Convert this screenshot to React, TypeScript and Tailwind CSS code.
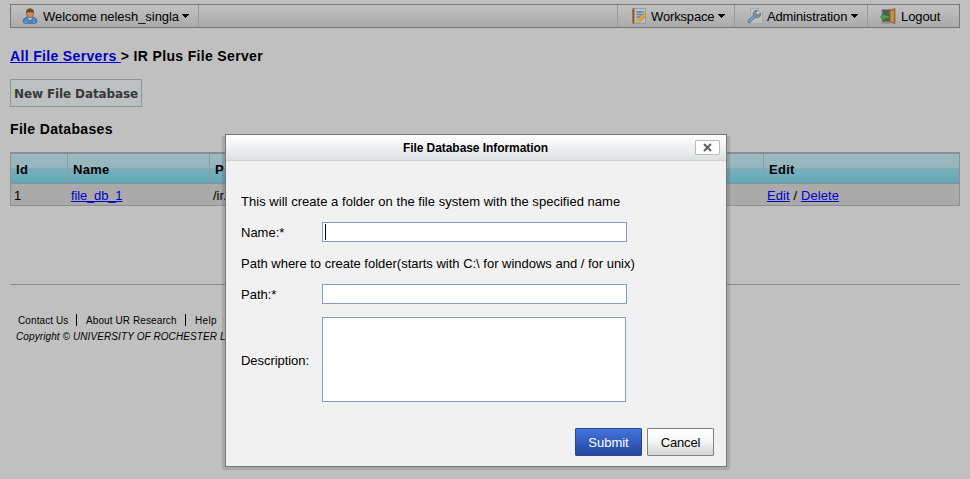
import React from "react";

const UserIcon = () => (
  <svg width="16" height="16" viewBox="0 0 16 16">
    <path d="M1.200 14.500V13c0-2.300 1.800-3.700 4-3.700h5.600c2.200 0 4 1.400 4 3.700v1.500l-2 .8H3.200z" fill="#4f86c4" stroke="#315f91" strokeWidth=".7" />
    <path d="M5.500 9.500 8 12l2.500-2.500z" fill="#c9d3dd" />
    <path d="M4 12.500v2.500M12 12.500v2.500" stroke="#7aa9d8" />
    <ellipse cx="8" cy="5.800" rx="3.400" ry="3.800" fill="#c98f5c" stroke="#744725" strokeWidth=".6" />
    <path d="M4.200 6C3.500 2 5.500.5 8 .5S12.500 2 11.800 6L11 4.200H5z" fill="#74441f" />
  </svg>
);

const NotebookIcon = () => (
  <svg width="16" height="16" viewBox="0 0 16 16">
    <path d="M2.500.5h12v15h-12z" fill="#b9bfc6" stroke="#8d969d" strokeWidth=".8" />
    <path d="M1 .5h2.500v15H1z" fill="#9c5526" />
    <path d="M0 2h2M0 5h2M0 8h2M0 11h2M0 14h2" stroke="#c4bdb6" strokeWidth=".8" />
    <path d="M5.500 4H12.500M5.500 6.500H11M5.500 9H9" stroke="#5783b2" strokeWidth="1.300" />
    <path d="m6.500 11 6-5.500 2.500 2.500-6 5.800-3.500 1z" fill="#dda93f" stroke="#9b6a26" strokeWidth=".5" />
    <path d="m5.500 14.800 1-3 2 2z" fill="#d8c4a0" />
    <path d="m12 5.800 1.500-1.300 2.200 2.300L14.500 8.200z" fill="#c99a58" />
  </svg>
);

const WrenchIcon = () => (
  <svg width="16" height="16" viewBox="0 0 16 16">
    <path d="M3.500.5H12l3.500 3.500v11.500h-12z" fill="#bfc0c2" stroke="#a2a4a7" strokeWidth=".8" />
    <path d="M12 .5v3.500h3.500" fill="#cdcdcd" stroke="#a2a4a7" strokeWidth=".7" />
    <path d="m2.300 13.300 5-4.800" stroke="#4c76a8" strokeWidth="3.600" strokeLinecap="round" />
    <path d="m2.300 13.300 5-4.800" stroke="#7ba0cd" strokeWidth="2.200" strokeLinecap="round" />
    <path d="M6.500 7.500C5.500 4.500 7.500 2 10.500 2.500L8.700 4.600l.5 2.100 2.200.6 1.900-2c.8 2.700-1.700 5-4.500 4.300z" fill="#8b98a5" stroke="#596977" strokeWidth=".9" />
  </svg>
);

const LogoutIcon = () => (
  <svg width="16" height="16" viewBox="0 0 16 16">
    <path d="M2 1.500h8V14H2z" fill="#525b5a" stroke="#858b86" />
    <path d="m9.800 2 5.200-1.500v15L9.800 14z" fill="#b37a3a" stroke="#8b5726" strokeWidth=".7" />
    <path d="m11 3.500 2.500-.7v10.500l-2.500-.5z" fill="#c9944f" />
    <path d="M.5 9 5 5v2.300h4v3.400H5v2.300z" fill="#54a347" stroke="#286e2d" strokeWidth=".8" />
    <path d="M1 15.200h9" stroke="#8b8c84" />
  </svg>
);

const Caret = ({ className = "" }: { className?: string }) => (
  <svg width="7" height="4" viewBox="0 0 7 4" className={className} shapeRendering="crispEdges">
    <path d="M0 0h7v1H0zM1 1h5v1H1zM2 2h3v1H2zM3 3h1v1H3z" />
  </svg>
);

const link = "text-[#0000c8] underline underline-offset-[1px] decoration-1";

export default function App() {
  return (
    <div className="relative h-[479px] w-[970px] overflow-hidden bg-[#c0c0c0] px-[10px] pt-1 font-['Liberation_Sans',Arial,sans-serif] text-[13px] leading-[16px] whitespace-nowrap text-black">
      <nav className="flex h-6 border border-[#777] bg-linear-to-b from-[#c2c2c2] to-[#aaa]">
        <div className="flex w-[188px] items-center border-r border-[#999] pl-[11px]">
          <UserIcon />
          <span className="ml-[5px] w-[135px] pt-px tracking-[-0.05px]">Welcome nelesh_singla</span>
          <Caret className="ml-[4px]" />
        </div>
        <div className="ml-auto flex w-[117px] items-center border-l border-[#999] pl-[13px]">
          <NotebookIcon />
          <span className="ml-[4px] w-[63px] pt-px tracking-[-0.15px]">Workspace</span>
          <Caret className="ml-[4px]" />
        </div>
        <div className="flex w-[133px] items-center border-l border-[#999] pl-[12px]">
          <WrenchIcon />
          <span className="ml-[4px] w-[80px] pt-px tracking-[-0.15px]">Administration</span>
          <Caret className="ml-[4px]" />
        </div>
        <div className="flex w-[92px] items-center border-l border-[#999] pl-[12px]">
          <LogoutIcon />
          <span className="ml-[5px] pt-px tracking-[-0.1px]">Logout</span>
        </div>
      </nav>

      <h1 className="mt-5 text-[14px] font-bold tracking-[0.34px]">
        <a className={link}>All File Servers </a>&gt; IR Plus File Server
      </h1>
      <button className="mt-[15px] flex h-7 w-[132px] items-center justify-center border border-[#8c9494] bg-[#bcc0c0] pt-[2px] font-['DejaVu_Sans',sans-serif] text-[12px] font-bold tracking-[-0.12px] text-[#343a3a]">
        New File Database
      </button>
      <h2 className="mt-[14px] text-[14px] font-bold tracking-[0.34px]">File Databases</h2>

      <div className="mt-[15px] h-[54px] border border-t-2 border-[#8e8e8e]">
        <div className="grid h-[30px] grid-cols-[57px_142px_554px_1fr] border-b border-[#8e8e8e] bg-[linear-gradient(#9bb9c0_0,#97b5bc_14px,#7dafba_14px,#60a9b8_100%)] font-bold tracking-[0.3px]">
          <div className="border-r border-[#8e9c9f] pt-[8px] pl-[5px]">Id</div>
          <div className="border-r border-[#8e9c9f] pt-[8px] pl-[5px]">Name</div>
          <div className="border-r border-[#8e9c9f] pt-[8px] pl-[5px] tracking-[1px]">Path</div>
          <div className="pt-[8px] pl-[5px]">Edit</div>
        </div>
        <div className="grid h-[21px] grid-cols-[57px_142px_554px_1fr] bg-[#aaa]">
          <div className="pt-[4px] pl-[3px]">1</div>
          <div className="pt-[4px] pl-[3px] tracking-[-0.15px]"><a className={link}>file_db_1</a></div>
          <div className="pt-[4px] pl-[3px]">/ir.</div>
          <div className="pt-[4px] pl-[3px] tracking-[0.1px]"><a className={link}>Edit</a> / <a className={link}>Delete</a></div>
        </div>
      </div>

      <footer className="mt-[78px] border-t border-[#8c8c8c] pt-[28px] text-[10px]">
        <div className="flex h-4 items-center pl-2">
          <span className="w-[51px] tracking-[0.1px]">Contact Us</span>
          <i className="mr-[9px] ml-[7px] -mt-[2px] h-3 w-px bg-black" />
          <span className="w-[91px] tracking-[0.1px]">About UR Research</span>
          <i className="mr-[9px] ml-[8px] -mt-[2px] h-3 w-px bg-black" />
          <span className="tracking-[0.3px]">Help</span>
        </div>
        <p className="pl-[6px] tracking-[0.1px] italic">Copyright © UNIVERSITY OF ROCHESTER LIBRARIES</p>
      </footer>

      <div className="absolute top-[136px] left-[222px] h-[334px] w-[508px] bg-black/12" />
      <section className="absolute top-[134px] left-[225px] h-[333px] w-[502px] border border-[#777] bg-[#f1f1f1]">
        <header className="relative flex h-[26px] items-center justify-center border-b border-[#cfd1d3] bg-linear-to-b from-white to-[#dfe1e3] text-[12px] font-bold">
          <span className="mr-px tracking-[-0.06px]">File Database Information</span>
          <button className="absolute top-[5px] right-[6px] flex h-[15px] w-[25px] items-center justify-center rounded-[1px] border border-[#bbb] bg-white">
            <svg width="9" height="9" viewBox="0 0 9 9"><path d="m1 1 7 7M8 1 1 8" stroke="#606060" strokeWidth="2" /></svg>
          </button>
        </header>
        <form className="px-[15px] pt-[33px]">
          <p className="tracking-[0.03px]">This will create a folder on the file system with the specified name</p>
          <div className="mt-[12px] flex h-5 items-center">
            <label className="w-[81px] pt-px">Name:*</label>
            <div className="flex h-5 w-[305px] items-center border border-[#7f9fc6] bg-white pl-[2px]"><i className="h-4 w-px bg-black" /></div>
          </div>
          <p className="mt-[14px] tracking-[-0.01px]">Path where to create folder(starts with C:\ for windows and / for unix)</p>
          <div className="mt-[12px] flex h-5 items-center">
            <label className="w-[81px] pt-px">Path:*</label>
            <div className="h-5 w-[305px] border border-[#7f9fc6] bg-white" />
          </div>
          <div className="mt-[13px] flex h-[85px] items-center">
            <label className="w-[81px] pt-[3px] tracking-[-0.05px]">Description:</label>
            <div className="h-[85px] w-[304px] border border-[#7f9fc6] bg-white" />
          </div>
        </form>
        <div className="mt-[26px] flex justify-end gap-[5px] pr-[12px]">
          <button className="h-7 w-[67px] rounded-[1px] border border-[#29488c] bg-linear-to-b from-[#4374df] to-[#25469b] pt-px text-white">Submit</button>
          <button className="h-7 w-[67px] rounded-[1px] border border-[#808080] bg-linear-to-b from-white via-[#f5f5f5] to-[#d2d2d2] pt-px tracking-[-0.2px]">Cancel</button>
        </div>
      </section>
    </div>
  );
}
